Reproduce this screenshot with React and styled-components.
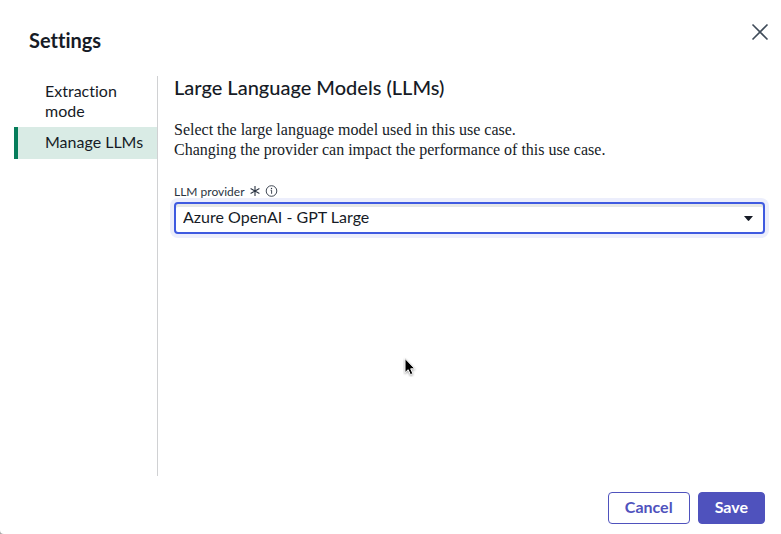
import React, { useState } from "react";
import styled, { createGlobalStyle } from "styled-components";

const GlobalStyle = createGlobalStyle`
  * {
    box-sizing: border-box;
  }
  body {
    margin: 0;
    background: #a8a8a8;
    color: #161b26;
    font-family: Lato, "Liberation Sans", sans-serif;
    font-size: 16px;
    font-variant-ligatures: none;
  }
`;

const Dialog = styled.div`
  position: relative;
  display: flex;
  flex-direction: column;
  min-height: 100vh;
  background: #fff;
  border-bottom-left-radius: 4px;
`;

const Header = styled.header`
  display: flex;
  justify-content: space-between;
  align-items: flex-start;
  height: 76px;
  padding: 19px 8px 0 29px;
`;

const Title = styled.h1`
  margin: 8px 0 0;
  font-size: 20px;
  line-height: 26px;
  font-weight: 700;
`;

const CloseButton = styled.button`
  display: flex;
  padding: 4px;
  border: 0;
  background: none;
  color: #3f4b59;
  cursor: pointer;
`;

const Body = styled.div`
  display: flex;
  flex: 1;
`;

const Nav = styled.nav`
  flex: 0 0 144px;
  margin-left: 14px;
  border-right: 1px solid #d0d1d3;
`;

const NavItem = styled.a`
  display: block;
  padding: ${(props) => (props.$active ? "5px 0 7px 27px" : "5px 24px 6px 27px")};
  border-left: 4px solid ${(props) => (props.$active ? "#067d5b" : "transparent")};
  background: ${(props) => (props.$active ? "#d9ebe5" : "transparent")};
  color: inherit;
  line-height: 20px;
  text-decoration: none;
`;

const Content = styled.main`
  flex: 1;
  min-width: 0;
  padding: 0 16px;
`;

const Heading = styled.h2`
  margin: 0 0 22px;
  font-size: 20px;
  line-height: 22px;
  font-weight: 500;
`;

const Description = styled.p`
  margin: 0;
  font-family: "Liberation Serif", serif;
  line-height: 20px;
`;

const LabelRow = styled.div`
  display: flex;
  align-items: center;
  gap: 5px;
  margin-top: 21px;
  height: 20px;
  margin-bottom: 1px;
  color: #2b3442;
  font-size: 12px;
`;

const SelectWrap = styled.div`
  position: relative;
`;

const Select = styled.select`
  display: block;
  width: 100%;
  height: 32px;
  padding: 0 32px 3px 7px;
  border: 2px solid #3f5ae0;
  border-radius: 4px;
  outline: 0;
  appearance: none;
  background: #fff;
  box-shadow: 0 0 0 4px #eceefc, inset 0 3px 0 #e6e8e7;
  color: inherit;
  font: inherit;
`;

const Caret = styled.svg`
  position: absolute;
  top: 14px;
  right: 12px;
  pointer-events: none;
`;

const Footer = styled.footer`
  display: flex;
  justify-content: flex-end;
  gap: 8px;
  padding: 16px 16px 10px;
`;

const Button = styled.button`
  height: 32px;
  padding: 0 16px 3px;
  border: 1px solid #4f52bd;
  border-radius: 4px;
  background: ${(props) => (props.$primary ? "#4f52bd" : "#fff")};
  color: ${(props) => (props.$primary ? "#fff" : "#4f52bd")};
  font: inherit;
  font-weight: 700;
  cursor: pointer;
`;

const Pointer = styled.svg`
  position: absolute;
  left: 403px;
  top: 357px;
  pointer-events: none;
`;

const CloseIcon = () => (
  <svg width="18" height="18" viewBox="0 0 18 18" aria-hidden="true">
    <path d="M1.5 1.5l15 15M16.5 1.5l-15 15" stroke="currentColor" strokeWidth="1.6" fill="none" />
  </svg>
);

const RequiredIcon = () => (
  <svg width="10" height="10" viewBox="0 0 10 10" aria-hidden="true">
    <path d="M5 0v10M.6 2.5l8.8 5M9.4 2.5l-8.8 5" stroke="currentColor" strokeWidth="1.1" />
  </svg>
);

const InfoIcon = () => (
  <svg width="13" height="12" viewBox="0 0 13 12" aria-hidden="true">
    <circle cx="6.5" cy="6" r="5.3" fill="none" stroke="currentColor" strokeWidth=".9" />
    <path d="M5.6 5.3H6.6V8.8" fill="none" stroke="currentColor" strokeWidth=".9" />
    <circle cx="6.5" cy="3.5" r=".7" fill="currentColor" />
  </svg>
);

const providers = ["Azure OpenAI - GPT Large"];

const App = () => {
  const [provider, setProvider] = useState(providers[0]);

  return (
    <>
      <GlobalStyle />
      <Dialog role="dialog" aria-labelledby="settings-title">
        <Header>
          <Title id="settings-title">Settings</Title>
          <CloseButton type="button" aria-label="Close">
            <CloseIcon />
          </CloseButton>
        </Header>
        <Body>
          <Nav>
            <NavItem href="#extraction">Extraction mode</NavItem>
            <NavItem href="#llms" $active aria-current="page">
              Manage LLMs
            </NavItem>
          </Nav>
          <Content>
            <Heading>Large Language Models (LLMs)</Heading>
            <Description>
              Select the large language model used in this use case.
              <br />
              Changing the provider can impact the performance of this use case.
            </Description>
            <LabelRow>
              <label htmlFor="provider">LLM provider</label>
              <RequiredIcon />
              <InfoIcon />
            </LabelRow>
            <SelectWrap>
              <Select
                id="provider"
                required
                value={provider}
                onChange={(e) => setProvider(e.target.value)}
              >
                {providers.map((name) => (
                  <option key={name}>{name}</option>
                ))}
              </Select>
              <Caret width="9" height="5" viewBox="0 0 9 5" aria-hidden="true">
                <path d="M0 0h9L5.2 4.6q-.7.7-1.4 0z" fill="#161b26" />
              </Caret>
            </SelectWrap>
          </Content>
        </Body>
        <Footer>
          <Button type="button">Cancel</Button>
          <Button type="button" $primary>
            Save
          </Button>
        </Footer>
        <Pointer width="14" height="20" viewBox="0 0 14 20" aria-hidden="true">
          <path
            d="M2 1.5v14.2l3.2-3 2.2 5 2.5-1.1-2.2-4.8h4.2z"
            fill="#000"
            stroke="#fff"
            style={{ filter: "drop-shadow(0 1px 1px rgba(0, 0, 0, 0.35))" }}
          />
        </Pointer>
      </Dialog>
    </>
  );
};

export default App;
